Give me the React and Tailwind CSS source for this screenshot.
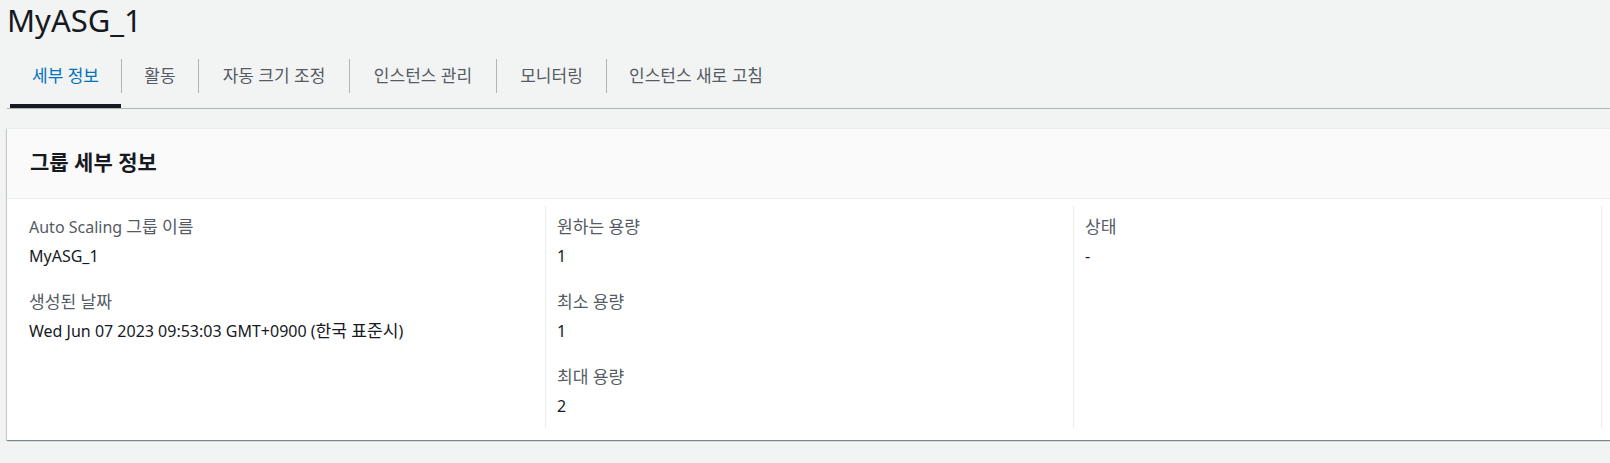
function ko(text) {
  const parts = text.split(/([\uac00-\ud7a3]+)/);
  return parts.map((p, i) =>
    /[\uac00-\ud7a3]/.test(p) ? (
      <span key={i} className="text-[1.07em] leading-none">
        {p}
      </span>
    ) : (
      p
    )
  );
}

export default function App() {
  const tabs = [
    { label: "세부 정보", w: "w-[111px]", active: true },
    { label: "활동", w: "w-[76px]" },
    { label: "자동 크기 조정", w: "w-[150px]" },
    { label: "인스턴스 관리", w: "w-[146px]" },
    { label: "모니터링", w: "w-[109px]" },
    { label: "인스턴스 새로 고침", w: "px-[22px]" },
  ];

  const columns = [
    [
      ["Auto Scaling 그룹 이름", "MyASG_1"],
      ["생성된 날짜", "Wed Jun 07 2023 09:53:03 GMT+0900 (한국 표준시)"],
    ],
    [
      ["원하는 용량", "1"],
      ["최소 용량", "1"],
      ["최대 용량", "2"],
    ],
    [["상태", "-"]],
    [],
  ];

  return (
    <div className="w-[1610px] h-[463px] overflow-hidden bg-[#f2f3f3] text-[#16191f] font-['Noto_Sans','Noto_Sans_CJK_KR',sans-serif] pl-[7px]">
      <h1 className="h-[48px] text-[31px] leading-[40px] font-normal">MyASG_1</h1>

      <div className="flex border-b border-[#aab7b8] pl-[3px]">
        {tabs.map((t, i) => (
          <div key={t.label} className="flex">
            {i > 0 && <div className="mt-[11px] h-[34px] w-px bg-[#aab7b8]" />}
            <div className={`flex flex-col ${t.w}`}>
              <div
                className={`h-[56px] flex items-center justify-center whitespace-nowrap text-[17px] ${
                  t.active ? "text-[#0073bb]" : "text-[#545b64]"
                }`}
              >
                {t.label}
              </div>
              <div className={`h-[4px] ${t.active ? "bg-[#16191f]" : "bg-transparent"}`} />
            </div>
          </div>
        ))}
      </div>

      <div className="mt-[19px] w-max bg-white border-t border-[#eaeded] shadow-[0_1px_1px_0_rgba(0,28,36,0.3),1px_1px_1px_0_rgba(0,28,36,0.15),-1px_1px_1px_0_rgba(0,28,36,0.15)]">
        <div className="bg-[#fafafa] border-b border-[#eaeded] px-[23px] pt-[19px] pb-[22px]">
          <h2 className="text-[21px] leading-[28px] font-bold">그룹 세부 정보</h2>
        </div>
        <div className="flex pl-[10px] pt-[7px] pb-[12px]">
          {columns.map((col, ci) => (
            <div
              key={ci}
              className={`w-[528px] border-l pl-[11px] pt-[10px] pb-[11px] flex flex-col gap-[24px] text-[16px] ${
                ci === 0 ? "border-transparent" : "border-[#eaeded]"
              }`}
            >
              {col.map(([label, value]) => (
                <div key={label}>
                  <div className="h-[22px] leading-[22px] text-[#545b64] whitespace-nowrap">{ko(label)}</div>
                  <div className="mt-[7px] h-[22px] leading-[22px] text-[#16191f] whitespace-nowrap">{ko(value)}</div>
                </div>
              ))}
            </div>
          ))}
        </div>
      </div>
    </div>
  );
}
